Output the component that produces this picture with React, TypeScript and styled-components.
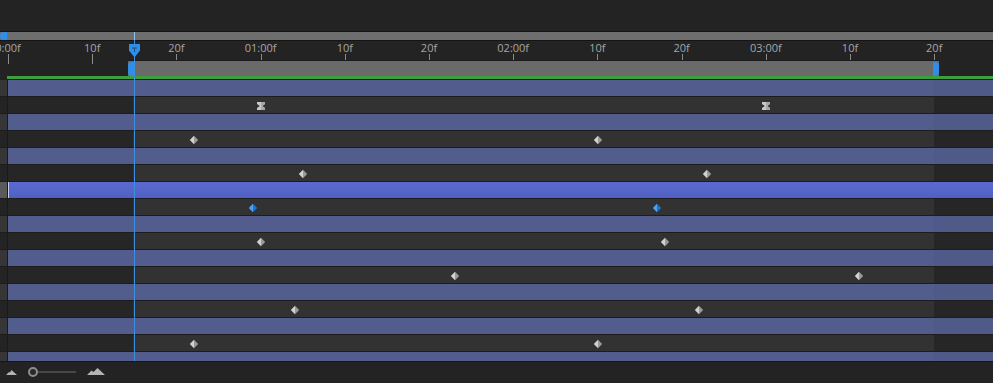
import React from "react"
import styled, { createGlobalStyle } from "styled-components"

// timeline geometry: frame 0 sits at x = 8, ~8.42px per frame (30fps)
const ORIGIN = 8
const FRAME_PX = 8.42
const xOf = (frame: number) => ORIGIN + frame * FRAME_PX

const WORK_START = 15
const WORK_END = 110
const CTI_FRAME = 15

const RULER_LABELS = [
	"0:00f",
	"10f",
	"20f",
	"01:00f",
	"10f",
	"20f",
	"02:00f",
	"10f",
	"20f",
	"03:00f",
	"10f",
	"20f",
]

type KeyKind = "diamond" | "blue" | "hold"

interface RowData {
	kind: "layer" | "prop"
	selected?: boolean
	keys?: number[]
	keyKind?: KeyKind
}

const ROWS: RowData[] = [
	{ kind: "layer" },
	{ kind: "prop", keys: [30, 90], keyKind: "hold" },
	{ kind: "layer" },
	{ kind: "prop", keys: [22, 70], keyKind: "diamond" },
	{ kind: "layer" },
	{ kind: "prop", keys: [35, 83], keyKind: "diamond" },
	{ kind: "layer", selected: true },
	{ kind: "prop", keys: [29, 77], keyKind: "blue" },
	{ kind: "layer" },
	{ kind: "prop", keys: [30, 78], keyKind: "diamond" },
	{ kind: "layer" },
	{ kind: "prop", keys: [53, 101], keyKind: "diamond" },
	{ kind: "layer" },
	{ kind: "prop", keys: [34, 82], keyKind: "diamond" },
	{ kind: "layer" },
	{ kind: "prop", keys: [22, 70], keyKind: "diamond" },
	{ kind: "layer" },
]

const GlobalStyle = createGlobalStyle`
	html, body {
		margin: 0;
		padding: 0;
		background: #232323;
	}
`

const Panel = styled.div`
	position: relative;
	width: 993px;
	height: 383px;
	display: flex;
	flex-direction: column;
	overflow: hidden;
	background: #232323;
	font-family: "Open Sans", "Liberation Sans", sans-serif;
`

const TopGap = styled.div`
	height: 31px;
	flex: 0 0 31px;
`

const Navigator = styled.div`
	position: relative;
	flex: 0 0 10px;
	box-sizing: border-box;
	background: #6e6e6e;
	border-top: 1px solid #141414;
	border-bottom: 1px solid #141414;
`

const NavHandle = styled.div`
	position: absolute;
	left: 0;
	top: 0;
	width: 7px;
	height: 8px;
	background: #2f8ee8;
	border-radius: 4px 0 0 4px;
`

const NavCti = styled.div<{ $x: number }>`
	position: absolute;
	left: ${(p) => p.$x}px;
	top: 0;
	width: 1px;
	height: 8px;
	background: #8fc0ee;
`

const Ruler = styled.div`
	position: relative;
	flex: 0 0 35px;
	overflow: hidden;
`

const RulerLabel = styled.span<{ $x: number }>`
	position: absolute;
	top: 0;
	left: ${(p) => p.$x}px;
	transform: translateX(-50%);
	font-size: 11px;
	line-height: 13px;
	color: #a6a6a6;
	white-space: nowrap;
`

const Tick = styled.div<{ $x: number }>`
	position: absolute;
	top: 13px;
	left: ${(p) => Math.round(p.$x)}px;
	width: 1px;
	height: 10px;
	background: #8c8c8c;
`

const WorkBar = styled.div<{ $left: number; $width: number }>`
	position: absolute;
	top: 19px;
	left: ${(p) => p.$left}px;
	width: ${(p) => p.$width}px;
	height: 16px;
	box-sizing: border-box;
	background: #6a6a6a;
	border-top: 1px solid #1b1b1b;
`

const WorkHandle = styled.div<{ $side: "left" | "right" }>`
	position: absolute;
	top: 1px;
	${(p) => p.$side}: 0;
	width: 6px;
	height: 14px;
	background: #2f8ee8;
	border-radius: ${(p) => (p.$side === "left" ? "4px 0 0 4px" : "0 4px 4px 0")};
`

const GreenLine = styled.div`
	flex: 0 0 4px;
	box-sizing: border-box;
	margin-left: 7px;
	background: #3c9f3e;
	border-bottom: 1px solid #1a1a1a;
`

const Rows = styled.div`
	flex: 1 1 auto;
	display: flex;
	flex-direction: column;
	overflow: hidden;
`

const Row = styled.div`
	flex: 0 0 17px;
	display: flex;
	box-sizing: border-box;
	border-bottom: 1px solid #1c1c1c;
`

const Strip = styled.div<{ $tone: string }>`
	flex: 0 0 7px;
	background: ${(p) => p.$tone};
	border-right: 1px solid #1a1a1a;
`

const Track = styled.div<{ $kind: "layer" | "prop"; $selected?: boolean }>`
	position: relative;
	flex: 1 1 auto;
	background: ${(p) => {
		const a = xOf(WORK_START) - ORIGIN - 1
		const b = xOf(WORK_END) - ORIGIN
		if (p.$selected)
			return "linear-gradient(180deg, #5b6ad2 0%, #5565c9 50%, #4f5fc2 100%)"
		if (p.$kind === "layer")
			return `linear-gradient(to right, #535d8d ${b}px, #505a88 ${b}px)`
		return `linear-gradient(to right, #262626 ${a}px, #323232 ${a}px ${b}px, #262626 ${b}px)`
	}};
	box-shadow: ${(p) => (p.$selected ? "inset 1px 0 0 #c8ccef" : "none")};
`

const KeyMark = styled.svg<{ $x: number }>`
	position: absolute;
	top: 4px;
	left: ${(p) => p.$x - ORIGIN - 4.5}px;
	width: 10px;
	height: 10px;
`

const CtiLine = styled.div<{ $x: number }>`
	position: absolute;
	left: ${(p) => p.$x}px;
	top: 40px;
	bottom: 22px;
	width: 1px;
	background: #3a8fe0;
`

const CtiHead = styled.svg<{ $x: number }>`
	position: absolute;
	left: ${(p) => p.$x - 6}px;
	top: 44px;
	width: 13px;
	height: 14px;
`

const BottomBar = styled.div`
	flex: 0 0 22px;
	box-sizing: border-box;
	display: flex;
	align-items: center;
	padding-left: 6px;
	padding-bottom: 2px;
	border-top: 1px solid #161616;
	background: #232323;
`

const ZoomSlider = styled.div`
	position: relative;
	display: flex;
	align-items: center;
	margin-left: 11px;
	width: 48px;
	height: 12px;
`

const SliderTrack = styled.div`
	margin-left: 8px;
	flex: 1 1 auto;
	height: 2px;
	background: #474747;
`

const SliderKnob = styled.div`
	position: absolute;
	left: 0;
	top: 1px;
	width: 6px;
	height: 6px;
	border: 2px solid #8e8e8e;
	border-radius: 50%;
	background: #2a2a2a;
`

const Mountain = styled.svg<{ $gap?: number }>`
	display: block;
	margin-left: ${(p) => p.$gap ?? 0}px;
`

function Keyframe({ frame, kind }: { frame: number; kind: KeyKind }) {
	const x = xOf(frame)
	if (kind === "hold") {
		return (
			<KeyMark $x={x} viewBox="0 0 10 10">
				<path d="M1 1H9V3L6.2 5L9 7V9H1V7L3.8 5L1 3Z" fill="#c9c9c9" />
				<path d="M5 1H9V3L6.2 5L9 7V9H5Z" fill="#a8a8a8" />
			</KeyMark>
		)
	}
	const light = kind === "blue" ? "#4aa3f5" : "#d2d2d2"
	const dark = kind === "blue" ? "#1f73c9" : "#9a9a9a"
	return (
		<KeyMark $x={x} viewBox="0 0 10 10">
			<path d="M5 0.8L5 9.2L0.8 5Z" fill={light} />
			<path d="M5 0.8L9.2 5L5 9.2Z" fill={dark} />
		</KeyMark>
	)
}

export default function App() {
	const ctiX = Math.round(xOf(CTI_FRAME))
	const workLeft = Math.round(xOf(WORK_START)) - 6
	const workRight = Math.round(xOf(WORK_END)) + 5

	return (
		<Panel>
			<GlobalStyle />
			<TopGap />
			<Navigator>
				<NavHandle />
				<NavCti $x={ctiX} />
			</Navigator>
			<Ruler>
				{RULER_LABELS.map((label, i) => (
					<React.Fragment key={i}>
						<RulerLabel $x={xOf(i * 10)}>{label}</RulerLabel>
						<Tick $x={xOf(i * 10)} />
					</React.Fragment>
				))}
				<WorkBar $left={workLeft} $width={workRight - workLeft}>
					<WorkHandle $side="left" />
					<WorkHandle $side="right" />
				</WorkBar>
			</Ruler>
			<GreenLine />
			<Rows>
				{ROWS.map((row, i) => (
					<Row key={i}>
						<Strip
							$tone={
								row.selected ? "#5a5a5a" : row.kind === "layer" ? "#363636" : "#242424"
							}
						/>
						<Track $kind={row.kind} $selected={row.selected}>
							{row.keys?.map((f) => (
								<Keyframe key={f} frame={f} kind={row.keyKind ?? "diamond"} />
							))}
						</Track>
					</Row>
				))}
			</Rows>
			<BottomBar>
				<Mountain width="11" height="6" viewBox="0 0 11 6">
					<path d="M0 6L3 3L4 3.6L5.5 1L11 6Z" fill="#b4b4b4" />
				</Mountain>
				<ZoomSlider>
					<SliderKnob />
					<SliderTrack />
				</ZoomSlider>
				<Mountain $gap={11} width="18" height="7" viewBox="0 0 18 7">
					<path d="M0 7L4.5 2.5L6.5 4L10.5 0L18 7Z" fill="#b4b4b4" />
				</Mountain>
			</BottomBar>
			<CtiLine $x={ctiX} />
			<CtiHead $x={ctiX} viewBox="0 0 13 14">
				<path d="M1 0H12V6.5L6.5 13.5L1 6.5Z" fill="#2f8ee8" />
				<path d="M4 4H9M6.5 4V8" stroke="#1b4f86" strokeWidth="1" />
			</CtiHead>
		</Panel>
	)
}
